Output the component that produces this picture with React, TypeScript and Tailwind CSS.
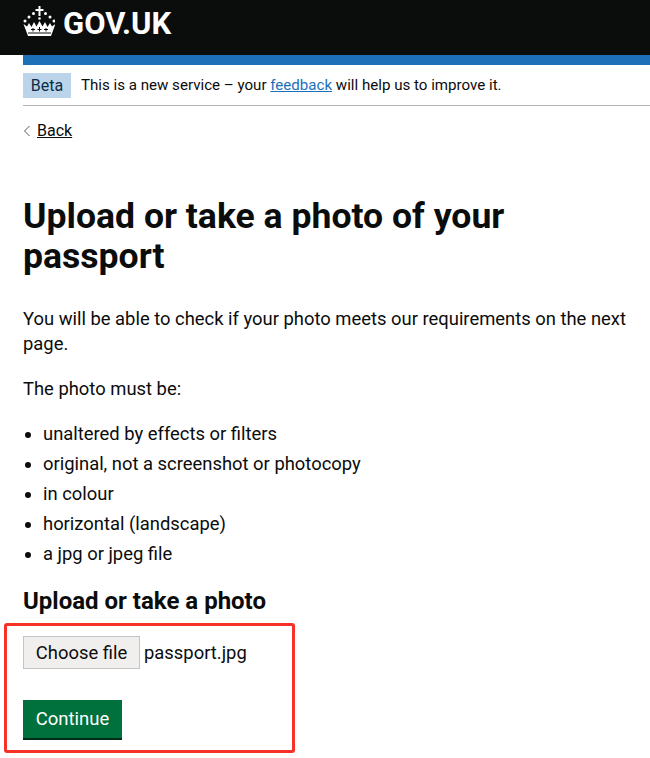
const font = { fontFamily: 'Roboto, "Liberation Sans", sans-serif' };

const requirements = [
  'unaltered by effects or filters',
  'original, not a screenshot or photocopy',
  'in colour',
  'horizontal (landscape)',
  'a jpg or jpeg file',
];

const Crown = () => (
  <svg viewBox="0 0 32 30" className="w-[32px] h-[30px] self-start mt-[6px]" aria-hidden="true">
    <g className="fill-white">
      {/* cross */}
      <path d="M15.500 0h2v3h3v2h-3v5h-2V5h-3V3h3z" />
      {/* jewels */}
      <circle cx="16.500" cy="12.500" r="1.300" />
      <circle cx="10.500" cy="7.500" r="1.500" />
      <circle cx="22.500" cy="7.500" r="1.500" />
      <circle cx="6" cy="11" r="1.500" />
      <circle cx="27" cy="11" r="1.500" />
      <circle cx="2" cy="15" r="1.500" />
      <circle cx="31" cy="15" r="1.500" />
      {/* crown body */}
      <path d="M0.500 18 4 20.500 6 17l2.500 4L11 16l2.500 4.500L16.500 15l3 5.500L22 16l2.500 5L27 17l2 3.500L32.500 18 28 30H5z" />
    </g>
    <g className="fill-[#0b0c0c]">
      <rect x="5" y="26.500" width="23" height="1" />
      <rect x="9.500" y="22" width="1" height="3.500" />
      <rect x="16" y="21" width="1" height="4.500" />
      <rect x="22.500" y="22" width="1" height="3.500" />
      <rect x="8" y="23" width="4" height="1" />
      <rect x="14.500" y="23" width="4" height="1" />
      <rect x="21" y="23" width="4" height="1" />
    </g>
  </svg>
);

export default function App() {
  return (
    <div className="relative min-h-[758px] bg-white text-[#0b0c0c] overflow-hidden" style={font}>
      <header className="h-[55px] bg-[#0b0c0c] pl-[23px] pb-[8px] flex items-center gap-[8px]">
        <Crown />
        <span className="text-[31px] font-bold text-white leading-none">GOV.UK</span>
      </header>

      <div className="ml-[23px]">
        <div className="h-[10px] bg-[#1d70b8]"></div>
        <div className="h-[41px] pt-[8px] flex items-start border-b border-[#b1b4b6]">
          <span className="bg-[#bbd4ea] text-[#0c2d4a] text-[16px] h-[25px] w-[48px] flex items-center justify-center">
            Beta
          </span>
          <p className="ml-[10px] text-[15.100px] leading-[25px]">
            This is a new service – your{' '}
            <a href="#" className="text-[#1d70b8] underline">feedback</a>{' '}
            will help us to improve it.
          </p>
        </div>
      </div>

      <div className="px-[23px]">
        <a href="#" className="mt-[14px] flex items-center gap-[6px] text-[16px] leading-[22px]">
          <svg viewBox="0 0 8 12" className="w-[8px] h-[12px] stroke-[#505a5f] fill-none" aria-hidden="true">
            <path d="M6.500 1 1.500 6l5 5" strokeWidth="1" />
          </svg>
          <span className="underline">Back</span>
        </a>

        <h1 className="mt-[54px] text-[35.600px] font-bold leading-[40px]">
          Upload or take a photo of your passport
        </h1>

        <p className="mt-[30px] text-[18.400px] leading-[25px]">
          You will be able to check if your photo meets our requirements on the next page.
        </p>
        <p className="mt-[20px] text-[18.400px] leading-[25px]">The photo must be:</p>

        <ul className="mt-[20px] list-disc pl-[20px] text-[18.400px] leading-[25px] flex flex-col gap-[5px]">
          {requirements.map(item => (
            <li key={item}>{item}</li>
          ))}
        </ul>

        <h2 className="mt-[20px] text-[24px] font-bold leading-[30px]">Upload or take a photo</h2>

        <div className="mt-[20px] flex items-center gap-[4px]">
          <span className="h-[33px] w-[117px] pt-[1px] bg-[#f0efee] border border-[#c4c4c4] text-[18.400px] flex items-center justify-center">
            Choose file
          </span>
          <span className="text-[18.400px] pt-[1px]">passport.jpg</span>
        </div>

        <button className="mt-[31px] h-[40px] w-[99px] pt-[2px] bg-[#00703c] text-white text-[18.500px] border-b-2 border-[#002d18] flex items-center justify-center">
          Continue
        </button>
      </div>

      {/* red annotation over the upload form */}
      <div className="absolute left-[4px] top-[623px] w-[291px] h-[130px] border-[3px] border-[#f5312a] rounded-[3px] pointer-events-none"></div>
    </div>
  );
}
